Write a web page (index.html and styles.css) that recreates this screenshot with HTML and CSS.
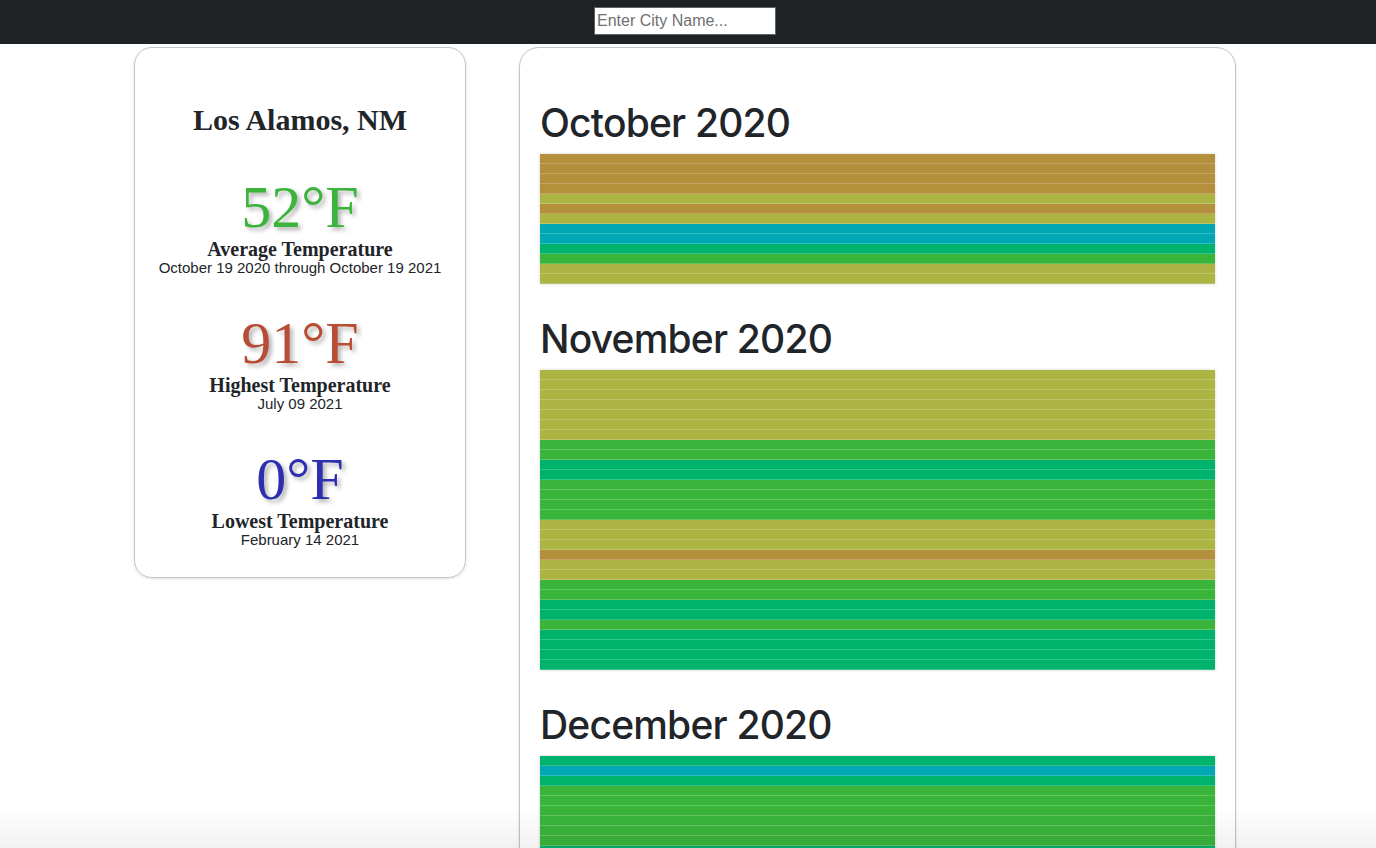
FILE: index.html
```html
<!DOCTYPE html>
<html lang="en">
<head>
<meta charset="utf-8">
<title>Weather Stripes</title>
<link rel="stylesheet" href="styles.css">
</head>
<body>
<header class="topbar">
  <input class="city-input" type="text" placeholder="Enter City Name...">
</header>
<main class="layout">
  <section class="summary-card">
    <h2 class="city">Los Alamos, NM</h2>
    <div class="stat">
      <div class="temp temp-avg">52°F</div>
      <div class="stat-label">Average Temperature</div>
      <div class="stat-date">October 19 2020 through October 19 2021</div>
    </div>
    <div class="stat">
      <div class="temp temp-high">91°F</div>
      <div class="stat-label">Highest Temperature</div>
      <div class="stat-date">July 09 2021</div>
    </div>
    <div class="stat">
      <div class="temp temp-low">0°F</div>
      <div class="stat-label">Lowest Temperature</div>
      <div class="stat-date">February 14 2021</div>
    </div>
  </section>
  <section class="stripes-card">
    <div class="month">
      <h1 class="month-title">October 2020</h1>
      <div class="stripes">
        <div class="day c-brown"></div><div class="day c-brown"></div><div class="day c-brown"></div><div class="day c-brown"></div>
        <div class="day c-olive"></div><div class="day c-brown"></div><div class="day c-olive"></div>
        <div class="day c-teal"></div><div class="day c-teal"></div><div class="day c-emerald"></div>
        <div class="day c-green"></div><div class="day c-olive"></div><div class="day c-olive"></div>
      </div>
    </div>
    <div class="month">
      <h1 class="month-title">November 2020</h1>
      <div class="stripes">
        <div class="day c-olive"></div><div class="day c-olive"></div><div class="day c-olive"></div><div class="day c-olive"></div>
        <div class="day c-olive"></div><div class="day c-olive"></div><div class="day c-olive"></div>
        <div class="day c-green"></div><div class="day c-green"></div>
        <div class="day c-emerald"></div><div class="day c-emerald"></div>
        <div class="day c-green"></div><div class="day c-green"></div><div class="day c-green"></div><div class="day c-green"></div>
        <div class="day c-olive"></div><div class="day c-olive"></div><div class="day c-olive"></div>
        <div class="day c-brown"></div>
        <div class="day c-olive"></div><div class="day c-olive"></div>
        <div class="day c-green"></div><div class="day c-green"></div>
        <div class="day c-emerald"></div><div class="day c-emerald"></div>
        <div class="day c-green"></div>
        <div class="day c-emerald"></div><div class="day c-emerald"></div><div class="day c-emerald"></div><div class="day c-emerald"></div>
      </div>
    </div>
    <div class="month">
      <h1 class="month-title">December 2020</h1>
      <div class="stripes">
        <div class="day c-emerald"></div><div class="day c-teal"></div><div class="day c-emerald"></div>
        <div class="day c-green"></div><div class="day c-green"></div><div class="day c-green"></div>
        <div class="day c-green"></div><div class="day c-green"></div><div class="day c-green"></div>
        <div class="day c-emerald"></div><div class="day c-emerald"></div><div class="day c-teal"></div>
        <div class="day c-teal"></div><div class="day c-emerald"></div><div class="day c-green"></div>
        <div class="day c-green"></div><div class="day c-emerald"></div><div class="day c-emerald"></div>
        <div class="day c-teal"></div><div class="day c-teal"></div><div class="day c-emerald"></div>
        <div class="day c-emerald"></div><div class="day c-green"></div><div class="day c-green"></div>
        <div class="day c-emerald"></div><div class="day c-teal"></div><div class="day c-teal"></div>
        <div class="day c-emerald"></div><div class="day c-emerald"></div><div class="day c-green"></div>
        <div class="day c-emerald"></div>
      </div>
    </div>
  </section>
</main>
<div class="bottom-fade"></div>
</body>
</html>
```

FILE: styles.css
```css
html {
  background: #fff;
}

body {
  margin: 0;
  color: #212529;
  font-family: "Liberation Sans", Arial, sans-serif;
}

.topbar {
  height: 44px;
  box-sizing: border-box;
  background: #1f2225;
  display: flex;
  justify-content: center;
  align-items: flex-start;
  padding: 7px 6px 0 0;
}

.city-input {
  width: 182px;
  height: 28px;
  box-sizing: border-box;
  margin: 0;
  padding: 1px 2px;
  border: 1px solid #5f6368;
  background: #fff;
  font-family: "Liberation Sans", Arial, sans-serif;
  font-size: 16px;
  color: #212529;
  outline: none;
}
.city-input::placeholder {
  color: #6f6f6f;
}

.layout {
  display: flex;
  justify-content: center;
  align-items: flex-start;
  gap: 53px;
  padding: 3px 6px 40px 0;
}

.summary-card {
  width: 332px;
  box-sizing: border-box;
  border: 1px solid #c4c4c4;
  border-radius: 18px;
  box-shadow: 0 1px 3px rgba(0, 0, 0, 0.12);
  padding: 54px 10px 29px;
  text-align: center;
  font-family: "Liberation Serif", "Times New Roman", serif;
}

.city {
  margin: 0 0 38px;
  font-size: 30px;
  line-height: 36px;
  font-weight: bold;
}

.stat + .stat {
  margin-top: 36px;
}

.temp {
  font-size: 60px;
  line-height: 62px;
  text-shadow: 3px 3px 4px rgba(0, 0, 0, 0.3);
}
.temp-avg { color: #3bb43b; }
.temp-high { color: #b84c34; }
.temp-low { color: #2e2fb0; }

.stat-label {
  font-size: 20px;
  line-height: 22px;
  font-weight: bold;
}

.stat-date {
  font-family: "Liberation Sans", Arial, sans-serif;
  font-size: 15px;
  line-height: 16px;
}

.stripes-card {
  width: 717px;
  box-sizing: border-box;
  border: 1px solid #c4c4c4;
  border-radius: 20px;
  box-shadow: 0 1px 3px rgba(0, 0, 0, 0.12);
  padding: 20px 20px 40px;
}

.month {
  margin-top: 31px;
}

.month-title {
  margin: 0 0 7px;
  font-family: Inter, "Liberation Sans", sans-serif;
  font-weight: 500;
  font-size: 39px;
  letter-spacing: -0.8px;
  line-height: 48px;
  color: #212529;
}

.stripes {
  display: flex;
  flex-direction: column;
  box-shadow: 0 0 3px rgba(0, 0, 0, 0.18);
}

.day {
  height: 9px;
  border-bottom: 1px solid rgba(255, 255, 255, 0.2);
}
.c-brown { background: #b4903c; }
.c-olive { background: #acb443; }
.c-teal { background: #00a8b3; }
.c-emerald { background: #00b36c; }
.c-green { background: #3bb43b; }

.bottom-fade {
  position: fixed;
  left: 0;
  right: 0;
  bottom: 0;
  height: 40px;
  pointer-events: none;
  background: linear-gradient(to bottom, rgba(0, 0, 0, 0), rgba(0, 0, 0, 0.055));
}
```
